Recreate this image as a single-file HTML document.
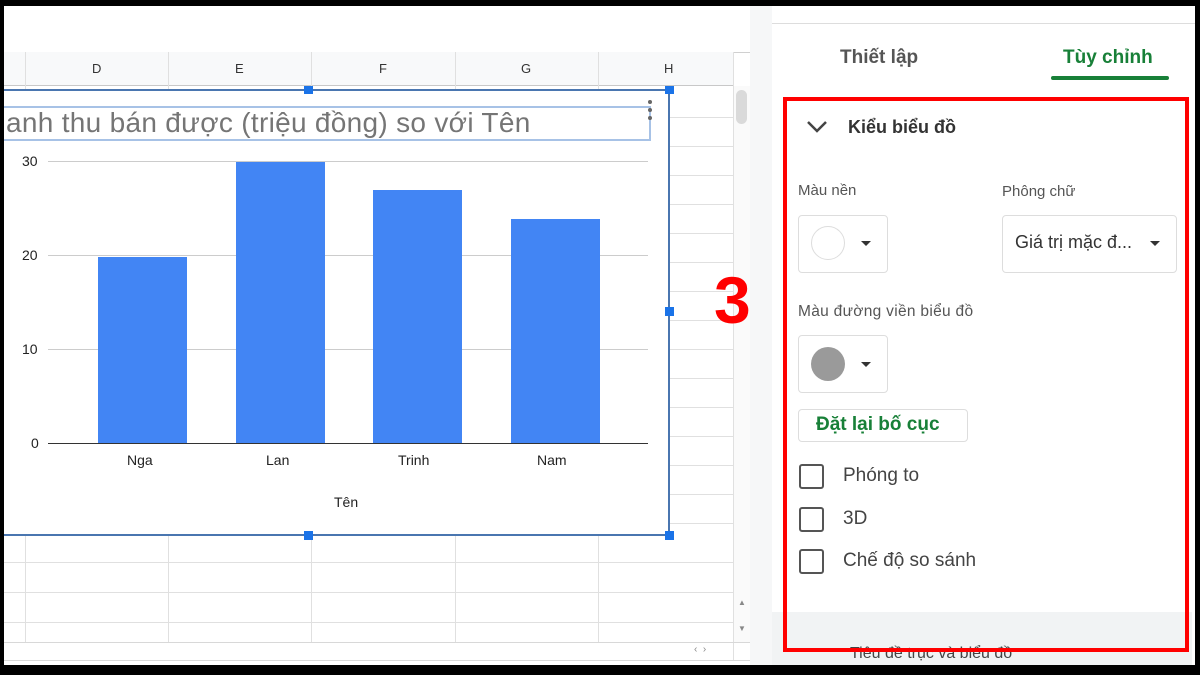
<!DOCTYPE html>
<html><head><meta charset="utf-8"><style>
*{margin:0;padding:0;box-sizing:border-box}
body{width:1200px;height:675px;background:#000;position:relative;overflow:hidden;font-family:"Liberation Sans",sans-serif}
.a{position:absolute}
.t{position:absolute;white-space:nowrap}
.arr{position:absolute;width:0;height:0;border-left:5px solid transparent;border-right:5px solid transparent;border-top:5px solid #333}
</style></head><body>
<div class="a" style="left:4px;top:6px;width:1191px;height:659px;background:#fff;overflow:hidden">
</div>
<!-- sheet area -->
<div class="a" style="left:4px;top:6px;width:746px;height:659px;background:#fff"></div>
<div class="a" style="left:4px;top:52px;width:746px;height:1px;background:#d0d0d0"></div>
<div class="a" style="left:4px;top:52px;width:730px;height:34px;background:#f8f9fa;border-bottom:1px solid #c8c8c8"></div>
<div class="a" style="left:25px;top:52px;width:1px;height:590px;background:#e0e0e0"></div>
<div class="a" style="left:168px;top:52px;width:1px;height:590px;background:#e0e0e0"></div>
<div class="a" style="left:311px;top:52px;width:1px;height:590px;background:#e0e0e0"></div>
<div class="a" style="left:455px;top:52px;width:1px;height:590px;background:#e0e0e0"></div>
<div class="a" style="left:598px;top:52px;width:1px;height:590px;background:#e0e0e0"></div>
<div class="a" style="left:733px;top:52px;width:1px;height:608px;background:#e0e0e0"></div>
<div class="t" style="left:92px;top:61px;font-size:13px;color:#333">D</div>
<div class="t" style="left:235px;top:61px;font-size:13px;color:#333">E</div>
<div class="t" style="left:379px;top:61px;font-size:13px;color:#333">F</div>
<div class="t" style="left:521px;top:61px;font-size:13px;color:#333">G</div>
<div class="t" style="left:664px;top:61px;font-size:13px;color:#333">H</div>
<!-- row lines -->
<div class="a" style="left:669px;top:117px;width:64px;height:1px;background:#e0e0e0"></div>
<div class="a" style="left:669px;top:146px;width:64px;height:1px;background:#e0e0e0"></div>
<div class="a" style="left:669px;top:175px;width:64px;height:1px;background:#e0e0e0"></div>
<div class="a" style="left:669px;top:204px;width:64px;height:1px;background:#e0e0e0"></div>
<div class="a" style="left:669px;top:233px;width:64px;height:1px;background:#e0e0e0"></div>
<div class="a" style="left:669px;top:262px;width:64px;height:1px;background:#e0e0e0"></div>
<div class="a" style="left:669px;top:291px;width:64px;height:1px;background:#e0e0e0"></div>
<div class="a" style="left:669px;top:320px;width:64px;height:1px;background:#e0e0e0"></div>
<div class="a" style="left:669px;top:349px;width:64px;height:1px;background:#e0e0e0"></div>
<div class="a" style="left:669px;top:378px;width:64px;height:1px;background:#e0e0e0"></div>
<div class="a" style="left:669px;top:407px;width:64px;height:1px;background:#e0e0e0"></div>
<div class="a" style="left:669px;top:436px;width:64px;height:1px;background:#e0e0e0"></div>
<div class="a" style="left:669px;top:465px;width:64px;height:1px;background:#e0e0e0"></div>
<div class="a" style="left:669px;top:494px;width:64px;height:1px;background:#e0e0e0"></div>
<div class="a" style="left:669px;top:523px;width:64px;height:1px;background:#e0e0e0"></div>
<div class="a" style="left:4px;top:562px;width:729px;height:1px;background:#e0e0e0"></div>
<div class="a" style="left:4px;top:592px;width:729px;height:1px;background:#e0e0e0"></div>
<div class="a" style="left:4px;top:622px;width:729px;height:1px;background:#e0e0e0"></div>
<div class="a" style="left:4px;top:642px;width:746px;height:1px;background:#d8d8d8"></div>
<div class="a" style="left:4px;top:660px;width:746px;height:1px;background:#d8d8d8"></div>
<!-- scrollbar -->
<div class="a" style="left:734px;top:86px;width:16px;height:556px;background:#fafafa"></div>
<div class="a" style="left:736px;top:90px;width:11px;height:34px;background:#dadada;border-radius:6px"></div>
<div class="t" style="left:738px;top:598px;font-size:8px;color:#888">▲</div>
<div class="t" style="left:738px;top:624px;font-size:8px;color:#888">▼</div>
<div class="t" style="left:694px;top:644px;font-size:10px;color:#888">‹ &nbsp;›</div>
<!-- chart -->
<div class="a" style="left:4px;top:89px;width:666px;height:447px;background:#fff;border:2px solid #4a76b0;border-left:none"></div>
<div class="a" style="left:4px;top:106px;width:647px;height:35px;border:2px solid #a7c2e6;border-left:none"></div>
<div class="t" style="left:6px;top:107px;font-size:28px;color:#757575;letter-spacing:0.3px">anh thu bán được (triệu đồng) so với Tên</div>
<div class="a" style="left:648px;top:100px;width:4px;height:4px;background:#666;border-radius:2px"></div>
<div class="a" style="left:648px;top:108px;width:4px;height:4px;background:#666;border-radius:2px"></div>
<div class="a" style="left:648px;top:116px;width:4px;height:4px;background:#666;border-radius:2px"></div>
<div class="a" style="left:304px;top:86px;width:9px;height:8px;background:#1a73e8"></div>
<div class="a" style="left:665px;top:86px;width:9px;height:8px;background:#1a73e8"></div>
<div class="a" style="left:665px;top:307px;width:9px;height:9px;background:#1a73e8"></div>
<div class="a" style="left:304px;top:531px;width:9px;height:9px;background:#1a73e8"></div>
<div class="a" style="left:665px;top:531px;width:9px;height:9px;background:#1a73e8"></div>
<div class="a" style="left:48px;top:161px;width:600px;height:1px;background:#ccc"></div>
<div class="a" style="left:48px;top:255px;width:600px;height:1px;background:#ccc"></div>
<div class="a" style="left:48px;top:349px;width:600px;height:1px;background:#ccc"></div>
<div class="t" style="left:22px;top:153px;font-size:14px;color:#222">30</div>
<div class="t" style="left:22px;top:247px;font-size:14px;color:#222">20</div>
<div class="t" style="left:22px;top:341px;font-size:14px;color:#222">10</div>
<div class="t" style="left:31px;top:435px;font-size:14px;color:#222">0</div>
<div class="a" style="left:98px;top:257px;width:89px;height:186px;background:#4285f4"></div>
<div class="a" style="left:236px;top:162px;width:89px;height:281px;background:#4285f4"></div>
<div class="a" style="left:373px;top:190px;width:89px;height:253px;background:#4285f4"></div>
<div class="a" style="left:511px;top:219px;width:89px;height:224px;background:#4285f4"></div>
<div class="a" style="left:48px;top:443px;width:600px;height:1px;background:#333"></div>
<div class="t" style="left:127px;top:452px;font-size:14px;color:#222">Nga</div>
<div class="t" style="left:266px;top:452px;font-size:14px;color:#222">Lan</div>
<div class="t" style="left:398px;top:452px;font-size:14px;color:#222">Trinh</div>
<div class="t" style="left:537px;top:452px;font-size:14px;color:#222">Nam</div>
<div class="t" style="left:334px;top:494px;font-size:14px;color:#222">Tên</div>
<!-- right panel -->
<div class="a" style="left:750px;top:6px;width:22px;height:659px;background:#f6f7f8"></div>
<div class="a" style="left:772px;top:23px;width:423px;height:1px;background:#ddd"></div>
<div class="t" style="left:840px;top:47px;font-size:19px;color:#555;font-weight:bold">Thiết lập</div>
<div class="t" style="left:1063px;top:47px;font-size:19px;color:#188038;font-weight:bold">Tùy chỉnh</div>
<div class="a" style="left:1051px;top:76px;width:118px;height:4px;background:#188038;border-radius:2px"></div>
<div class="a" style="left:772px;top:612px;width:420px;height:53px;background:#f1f3f4"></div>
<div class="t" style="left:850px;top:645px;font-size:16px;color:#444">Tiêu đề trục và biểu đồ</div>
<div class="a" style="left:783px;top:97px;width:406px;height:555px;border:4px solid #f00"></div>
<svg class="a" style="left:806px;top:118px" width="22" height="16"><path d="M2 4 L11 13 L20 4" fill="none" stroke="#444" stroke-width="2.5"/></svg>
<div class="t" style="left:848px;top:117px;font-size:18px;color:#333;font-weight:bold">Kiểu biểu đồ</div>
<div class="t" style="left:798px;top:182px;font-size:15px;color:#555">Màu nền</div>
<div class="t" style="left:1002px;top:183px;font-size:15px;color:#555">Phông chữ</div>
<div class="a" style="left:798px;top:215px;width:90px;height:58px;border:1px solid #ddd;border-radius:4px"></div>
<div class="a" style="left:811px;top:226px;width:34px;height:34px;border:1px solid #ddd;border-radius:50%"></div>
<div class="arr" style="left:861px;top:241px"></div>
<div class="a" style="left:1002px;top:215px;width:175px;height:58px;border:1px solid #ddd;border-radius:4px"></div>
<div class="t" style="left:1015px;top:232px;font-size:18px;color:#333">Giá trị mặc đ...</div>
<div class="arr" style="left:1150px;top:241px"></div>
<div class="t" style="left:798px;top:303px;font-size:15.5px;color:#555;letter-spacing:0.3px">Màu đường viền biểu đồ</div>
<div class="a" style="left:798px;top:335px;width:90px;height:58px;border:1px solid #ddd;border-radius:4px"></div>
<div class="a" style="left:811px;top:347px;width:34px;height:34px;background:#9a9a9a;border-radius:50%"></div>
<div class="arr" style="left:861px;top:362px"></div>
<div class="a" style="left:798px;top:409px;width:170px;height:33px;border:1px solid #ddd;border-radius:4px"></div>
<div class="t" style="left:816px;top:414px;font-size:19px;color:#188038;font-weight:bold">Đặt lại bố cục</div>
<div class="a" style="left:799px;top:464px;width:25px;height:25px;border:2.5px solid #555;border-radius:3px"></div>
<div class="t" style="left:843px;top:465px;font-size:19px;color:#444">Phóng to</div>
<div class="a" style="left:799px;top:507px;width:25px;height:25px;border:2.5px solid #555;border-radius:3px"></div>
<div class="t" style="left:843px;top:508px;font-size:19px;color:#444">3D</div>
<div class="a" style="left:799px;top:549px;width:25px;height:25px;border:2.5px solid #555;border-radius:3px"></div>
<div class="t" style="left:843px;top:550px;font-size:19px;color:#444">Chế độ so sánh</div>
<div class="t" style="left:714px;top:262px;font-size:66px;color:#f00;font-weight:bold">3</div>
</body></html>
